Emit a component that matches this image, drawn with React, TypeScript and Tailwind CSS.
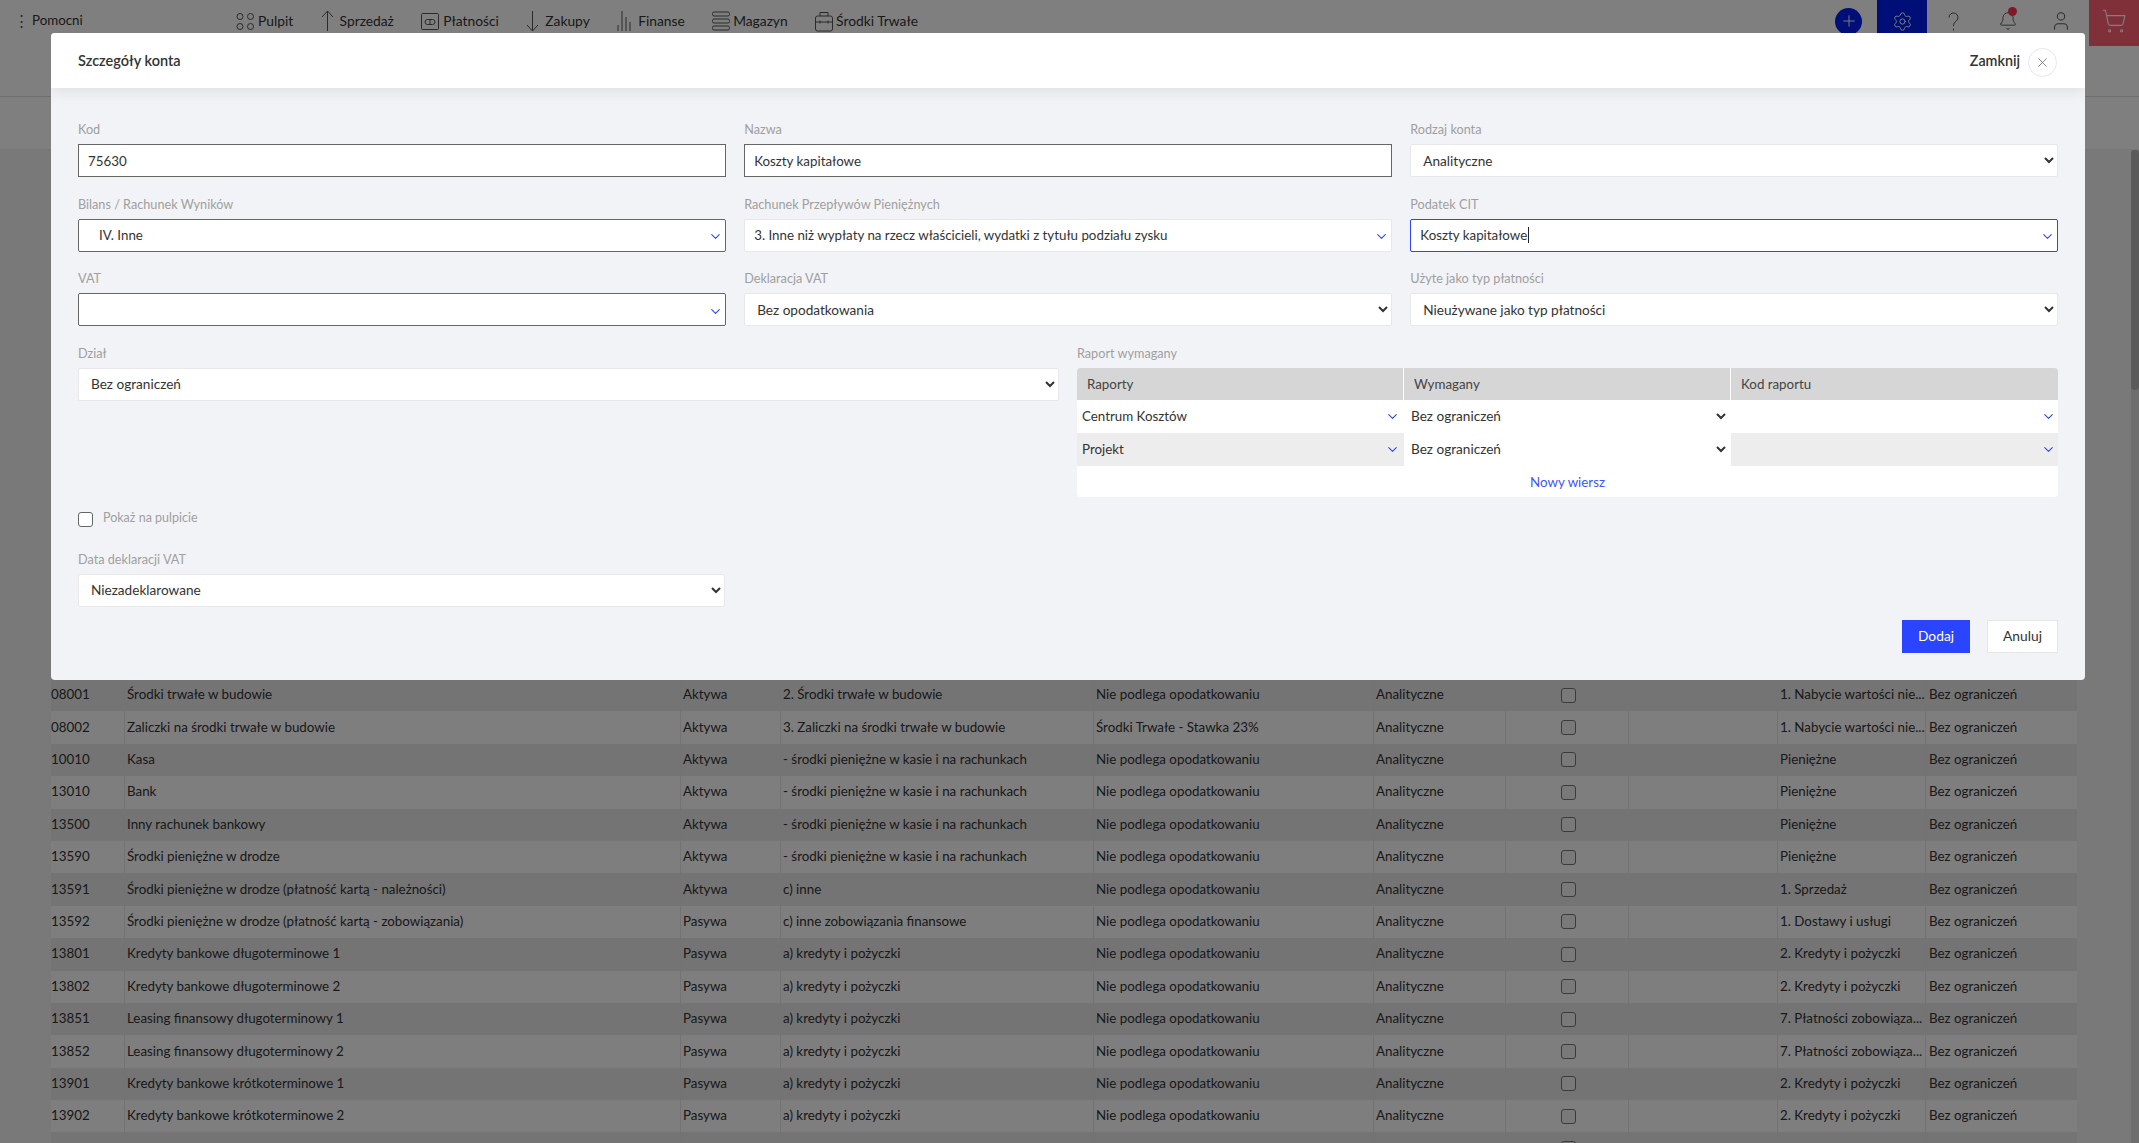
import { ChevronDown, Plus, Settings, Bell, User, ShoppingCart, X } from "lucide-react";

/* ── Table rows behind the dialog ── */
const NBW = "Nie podlega opodatkowaniu";
const rows = [
  ["08001", "Środki trwałe w budowie", "Aktywa", "2. Środki trwałe w budowie", NBW, "1. Nabycie wartości nie..."],
  ["08002", "Zaliczki na środki trwałe w budowie", "Aktywa", "3. Zaliczki na środki trwałe w budowie", "Środki Trwałe - Stawka 23%", "1. Nabycie wartości nie..."],
  ["10010", "Kasa", "Aktywa", "- środki pieniężne w kasie i na rachunkach", NBW, "Pieniężne"],
  ["13010", "Bank", "Aktywa", "- środki pieniężne w kasie i na rachunkach", NBW, "Pieniężne"],
  ["13500", "Inny rachunek bankowy", "Aktywa", "- środki pieniężne w kasie i na rachunkach", NBW, "Pieniężne"],
  ["13590", "Środki pieniężne w drodze", "Aktywa", "- środki pieniężne w kasie i na rachunkach", NBW, "Pieniężne"],
  ["13591", "Środki pieniężne w drodze (płatność kartą - należności)", "Aktywa", "c) inne", NBW, "1. Sprzedaż"],
  ["13592", "Środki pieniężne w drodze (płatność kartą - zobowiązania)", "Pasywa", "c) inne zobowiązania finansowe", NBW, "1. Dostawy i usługi"],
  ["13801", "Kredyty bankowe długoterminowe 1", "Pasywa", "a) kredyty i pożyczki", NBW, "2. Kredyty i pożyczki"],
  ["13802", "Kredyty bankowe długoterminowe 2", "Pasywa", "a) kredyty i pożyczki", NBW, "2. Kredyty i pożyczki"],
  ["13851", "Leasing finansowy długoterminowy 1", "Pasywa", "a) kredyty i pożyczki", NBW, "7. Płatności zobowiąza..."],
  ["13852", "Leasing finansowy długoterminowy 2", "Pasywa", "a) kredyty i pożyczki", NBW, "7. Płatności zobowiąza..."],
  ["13901", "Kredyty bankowe krótkoterminowe 1", "Pasywa", "a) kredyty i pożyczki", NBW, "2. Kredyty i pożyczki"],
  ["13902", "Kredyty bankowe krótkoterminowe 2", "Pasywa", "a) kredyty i pożyczki", NBW, "2. Kredyty i pożyczki"],
  ["", "", "", "", "", ""],
];

const cell = "flex h-full items-center whitespace-nowrap border-r border-[#e6e6e6] pl-0.5";

function NavIcon({ name }: { name: string }) {
  const cls = "shrink-0 fill-none stroke-[#555] [stroke-width:1]";
  if (name === "grid")
    return (
      <svg width="19" height="19" viewBox="0 0 19 19" className={cls}>
        <circle cx="4" cy="4.5" r="3" /><circle cx="14.5" cy="4.5" r="3" />
        <circle cx="4" cy="14.5" r="3" /><circle cx="14.5" cy="14.5" r="3" />
      </svg>
    );
  if (name === "up")
    return (
      <svg width="13" height="22" viewBox="0 0 13 22" className={cls}>
        <path d="M6.5 21V1M1 7l5.5-6 5.5 6" />
      </svg>
    );
  if (name === "down")
    return (
      <svg width="13" height="22" viewBox="0 0 13 22" className={cls}>
        <path d="M6.5 1v20M1 15l5.5 6 5.5-6" />
      </svg>
    );
  if (name === "card")
    return (
      <svg width="18" height="19" viewBox="0 0 18 19" className={cls}>
        <rect x="0.5" y="1.5" width="17" height="16" rx="1" />
        <rect x="4" y="7.5" width="10" height="5" rx="2.5" />
        <path d="M9 7.5v5" />
      </svg>
    );
  if (name === "bars")
    return (
      <svg width="14" height="22" viewBox="0 0 14 22" className={cls}>
        <path d="M1 21v-6M5 21V1M9 21V7M13 21v-9" />
      </svg>
    );
  if (name === "stack")
    return (
      <svg width="18" height="20" viewBox="0 0 18 20" className={cls}>
        <rect x="0.5" y="1" width="17" height="4" rx="1.5" />
        <rect x="0.5" y="8" width="17" height="4" rx="1.5" />
        <rect x="0.5" y="15" width="17" height="4" rx="1.5" />
      </svg>
    );
  return (
    <svg width="18" height="21" viewBox="0 0 18 21" className={cls}>
      <path d="M5 5V1.5h8V5" />
      <rect x="0.5" y="5" width="17" height="15" rx="2" />
      <path d="M0.5 11h17M5 9.5v3M13 9.5v3" />
    </svg>
  );
}

const navItems = [
  { label: "Pulpit", icon: "grid", gap: "gap-[3px]" },
  { label: "Sprzedaż", icon: "up", gap: "gap-[6px]" },
  { label: "Płatności", icon: "card", gap: "gap-1" },
  { label: "Zakupy", icon: "down", gap: "gap-[6px]" },
  { label: "Finanse", icon: "bars", gap: "gap-[7px]" },
  { label: "Magazyn", icon: "stack", gap: "gap-[3px]" },
  { label: "Środki Trwałe", icon: "case", gap: "gap-[3px]" },
];

function Field({ label, children, className }: { label: string; children: React.ReactNode; className?: string }) {
  return (
    <div className={className}>
      <div className="mb-[8px] h-[14px] whitespace-nowrap text-[12.67px] leading-[14px] text-[#9f9f9f]">{label}</div>
      {children}
    </div>
  );
}

function TextBox({ value }: { value: string }) {
  return (
    <input
      readOnly
      value={value}
      className="block h-[33px] w-full border border-[#666] bg-white px-[9px] text-[13.33px] text-[#333] outline-none"
    />
  );
}

/* Searchable combo with the thin blue chevron */
function Combo({ value, tone = "plain", cursor, className }: { value: string; tone?: "plain" | "dark" | "focus"; cursor?: boolean; className?: string }) {
  const border =
    tone === "dark" ? "border-[#666]" : tone === "focus" ? "border-[#2b44ff]" : "border-[#e8e8ea]";
  return (
    <div className={`flex h-[33px] items-center justify-between rounded-[2px] border bg-white pr-[2px] text-[13.33px] text-[#333] ${border} ${className ?? "pl-[9px]"}`}>
      <span className="truncate pt-px">
        {value}
        {cursor && <span className="ml-px inline-block h-[16px] w-px bg-[#222] align-[-3px]" />}
      </span>
      <ChevronDown size={15} strokeWidth={1.75} className="mt-[3px] shrink-0 text-[#2b44ff]" />
    </div>
  );
}

function Select({ value, className }: { value: string; className?: string }) {
  return (
    <select
      defaultValue={value}
      className={`h-[33px] w-full rounded-[2px] border border-[#e8e8ea] bg-white pl-2 text-[13.6px] text-[#333] outline-none ${className ?? ""}`}
    >
      <option>{value}</option>
    </select>
  );
}

function ReportRow({ name, shaded }: { name: string; shaded?: boolean }) {
  const bg = shaded ? "bg-[#ededee]" : "bg-white";
  return (
    <div className="grid h-[33px] grid-cols-[327px_327px_327px] text-[13.33px] text-[#333]">
      <div className={`flex items-center justify-between pl-[5px] pr-1 ${bg}`}>
        <span className="pt-[2px]">{name}</span>
        <ChevronDown size={15} strokeWidth={1.75} className="text-[#2b44ff]" />
      </div>
      <div className="bg-white pr-[2px]">
        <select defaultValue="Bez ograniczeń" className="h-full w-full pl-[3px] text-[13.6px] outline-none">
          <option>Bez ograniczeń</option>
        </select>
      </div>
      <div className={`flex items-center justify-end pr-[2px] ${bg}`}>
        <ChevronDown size={15} strokeWidth={1.75} className="text-[#2b44ff]" />
      </div>
    </div>
  );
}

export default function App() {
  return (
    <div className="relative h-[1143px] w-full overflow-hidden bg-[#f2f2f5] text-[13.33px] text-[#333] [font-family:Lato,sans-serif]">
      {/* ── Top bar ── */}
      <header className="flex h-[46px] items-center bg-white">
        <div className="mb-1 flex w-[236px] items-center pl-[14px]">
          <span className="w-[18px] text-[15px] leading-none text-[#555]">⋮</span>
          <span>Pomocni</span>
        </div>
        <nav className="mb-1 flex items-center gap-[27.4px] text-[13.8px]">
          {navItems.map((item) => (
            <div key={item.label} className={`flex items-center ${item.gap}`}>
              <NavIcon name={item.icon} />
              <span>{item.label}</span>
            </div>
          ))}
        </nav>
        <div className="ml-auto flex h-full items-center">
          <div className="mb-1 flex h-[27px] w-[27px] items-center justify-center rounded-full bg-[#001ff0]">
            <Plus size={18} strokeWidth={1.25} className="text-white" />
          </div>
          <div className="ml-[15px] flex h-full w-[50px] items-center justify-center bg-[#001ff0] pb-1">
            <Settings size={21} strokeWidth={1.1} className="text-white" />
          </div>
          <svg width="11" height="19" viewBox="0 0 11 19" className="mb-1 ml-[21px] fill-none stroke-[#555]">
            <path d="M1 5.5a4.5 4.5 0 1 1 7.5 3.3C6.5 10.5 5.5 11.5 5.5 14M5.5 16.5v2" />
          </svg>
          <div className="relative mb-1 ml-[39px]">
            <Bell size={20} strokeWidth={1.1} className="text-[#555]" />
            <span className="absolute -top-1 right-[1px] h-[9px] w-[9px] rounded-full bg-[#ff3355]" />
          </div>
          <User size={22} strokeWidth={1.1} className="mb-1 ml-[32px] text-[#555]" />
          <div className="ml-[17px] flex h-full w-[50px] items-center justify-center bg-[#ff6070] pb-1">
            <ShoppingCart size={26} strokeWidth={1} className="text-white" />
          </div>
        </div>
      </header>

      {/* ── Toolbar strips behind the dialog ── */}
      <div className="h-[51px] border-b border-[#dcdcdc] bg-white" />
      <div className="h-[53px] border-b border-[#f0f0f0] bg-white" />

      {/* ── Account table ── */}
      <main className="ml-[51px] w-[2026px] pt-[529px]">
        {rows.map((r, i) => (
          <div
            key={i}
            className={`grid h-[32.4px] grid-cols-[74px_556px_100px_313px_280px_132px_123px_149px_148px_151px] ${i % 2 ? "bg-[#fcfcfc]" : "bg-[#e8e8e8]"}`}
          >
            <div className="flex h-full items-center border-r border-[#e6e6e6]">{r[0]}</div>
            <div className={cell}>{r[1]}</div>
            <div className={cell}>{r[2]}</div>
            <div className={cell}>{r[3]}</div>
            <div className={cell}>{r[4]}</div>
            <div className={cell}>{r[0] && "Analityczne"}</div>
            <div className={`${cell} justify-center`}>
              <input type="checkbox" readOnly className="h-[15px] w-[15px] appearance-none rounded-[3px] border border-[#777] bg-[#f2f2f2]" />
            </div>
            <div className={cell} />
            <div className={cell}>{r[5]}</div>
            <div className="flex items-center pl-[3px]">{r[0] && "Bez ograniczeń"}</div>
          </div>
        ))}
      </main>

      {/* scrollbar */}
      <div className="absolute bottom-0 right-0 top-[150px] w-[8px] bg-[#dcdcdc]">
        <div className="h-[240px] w-[8px] rounded-full bg-[#b4b4b4]" />
      </div>

      <div className="absolute inset-0 bg-black/50" />

      {/* ── Dialog ── */}
      <section className="absolute left-[51px] top-[33px] w-[2034px] overflow-hidden rounded-[4px] bg-[#f2f3f6]">
        <div className="relative flex h-[55px] items-center justify-between bg-white pl-[27px] pr-[28px] pt-px shadow-[0_4px_14px_rgba(0,0,0,0.08)]">
          <span className="text-[14.5px] font-semibold text-[#333]">Szczegóły konta</span>
          <div className="flex items-center gap-2">
            <span className="text-[14.3px] font-semibold text-[#333]">Zamknij</span>
            <span className="mt-[2px] flex h-[29px] w-[29px] items-center justify-center rounded-full border border-[#e6e6e6] bg-white">
              <X size={15} strokeWidth={1.25} className="text-[#666]" />
            </span>
          </div>
        </div>

        <div className="px-[27px] pb-[27px] pt-[34px]">
          <div className="grid grid-cols-3 gap-x-[18.5px] gap-y-[19.5px]">
            <Field label="Kod"><TextBox value="75630" /></Field>
            <Field label="Nazwa"><TextBox value="Koszty kapitałowe" /></Field>
            <Field label="Rodzaj konta"><Select value="Analityczne" /></Field>
            <Field label="Bilans / Rachunek Wyników"><Combo value="IV. Inne" tone="dark" className="pl-[20px]" /></Field>
            <Field label="Rachunek Przepływów Pieniężnych">
              <Combo value="3. Inne niż wypłaty na rzecz właścicieli, wydatki z tytułu podziału zysku" />
            </Field>
            <Field label="Podatek CIT"><Combo value="Koszty kapitałowe" tone="focus" cursor /></Field>
            <Field label="VAT"><Combo value="" tone="dark" /></Field>
            <Field label="Deklaracja VAT"><Select value="Bez opodatkowania" /></Field>
            <Field label="Użyte jako typ płatności"><Select value="Nieużywane jako typ płatności" /></Field>
          </div>

          <div className="mt-[19.5px] grid grid-cols-2 gap-x-[18px]">
            <Field label="Dział"><Select value="Bez ograniczeń" /></Field>
            <Field label="Raport wymagany">
              <div className="grid h-[32px] grid-cols-[327px_327px_327px] divide-x divide-white rounded-t-[4px] bg-[#d6d6d6] leading-[32px] text-[#444]">
                <div className="pl-[10px]">Raporty</div>
                <div className="pl-[10px]">Wymagany</div>
                <div className="pl-[10px]">Kod raportu</div>
              </div>
              <ReportRow name="Centrum Kosztów" />
              <ReportRow name="Projekt" shaded />
              <div className="h-[31px] rounded-b-[4px] bg-white text-center leading-[32px] text-[#3d55ff]">Nowy wiersz</div>
            </Field>
          </div>

          <label className="mt-[15px] flex h-[15px] items-center gap-[10px] text-[12.5px] text-[#9f9f9f]">
            <input type="checkbox" className="h-[15px] w-[15px] appearance-none rounded-[3px] border border-[#666] bg-white" />
            <span className="mb-[2px]">Pokaż na pulpicie</span>
          </label>

          <Field label="Data deklaracji VAT" className="mt-[25px] w-[647px]">
            <Select value="Niezadeklarowane" />
          </Field>

          <div className="mt-[13px] flex justify-end gap-[17px] text-[13.8px]">
            <button type="button" className="h-[33px] w-[68px] bg-[#2b44ff] text-white">Dodaj</button>
            <button type="button" className="h-[33px] w-[71px] border border-[#e6e6e6] bg-white text-[#333]">Anuluj</button>
          </div>
        </div>
      </section>
    </div>
  );
}
